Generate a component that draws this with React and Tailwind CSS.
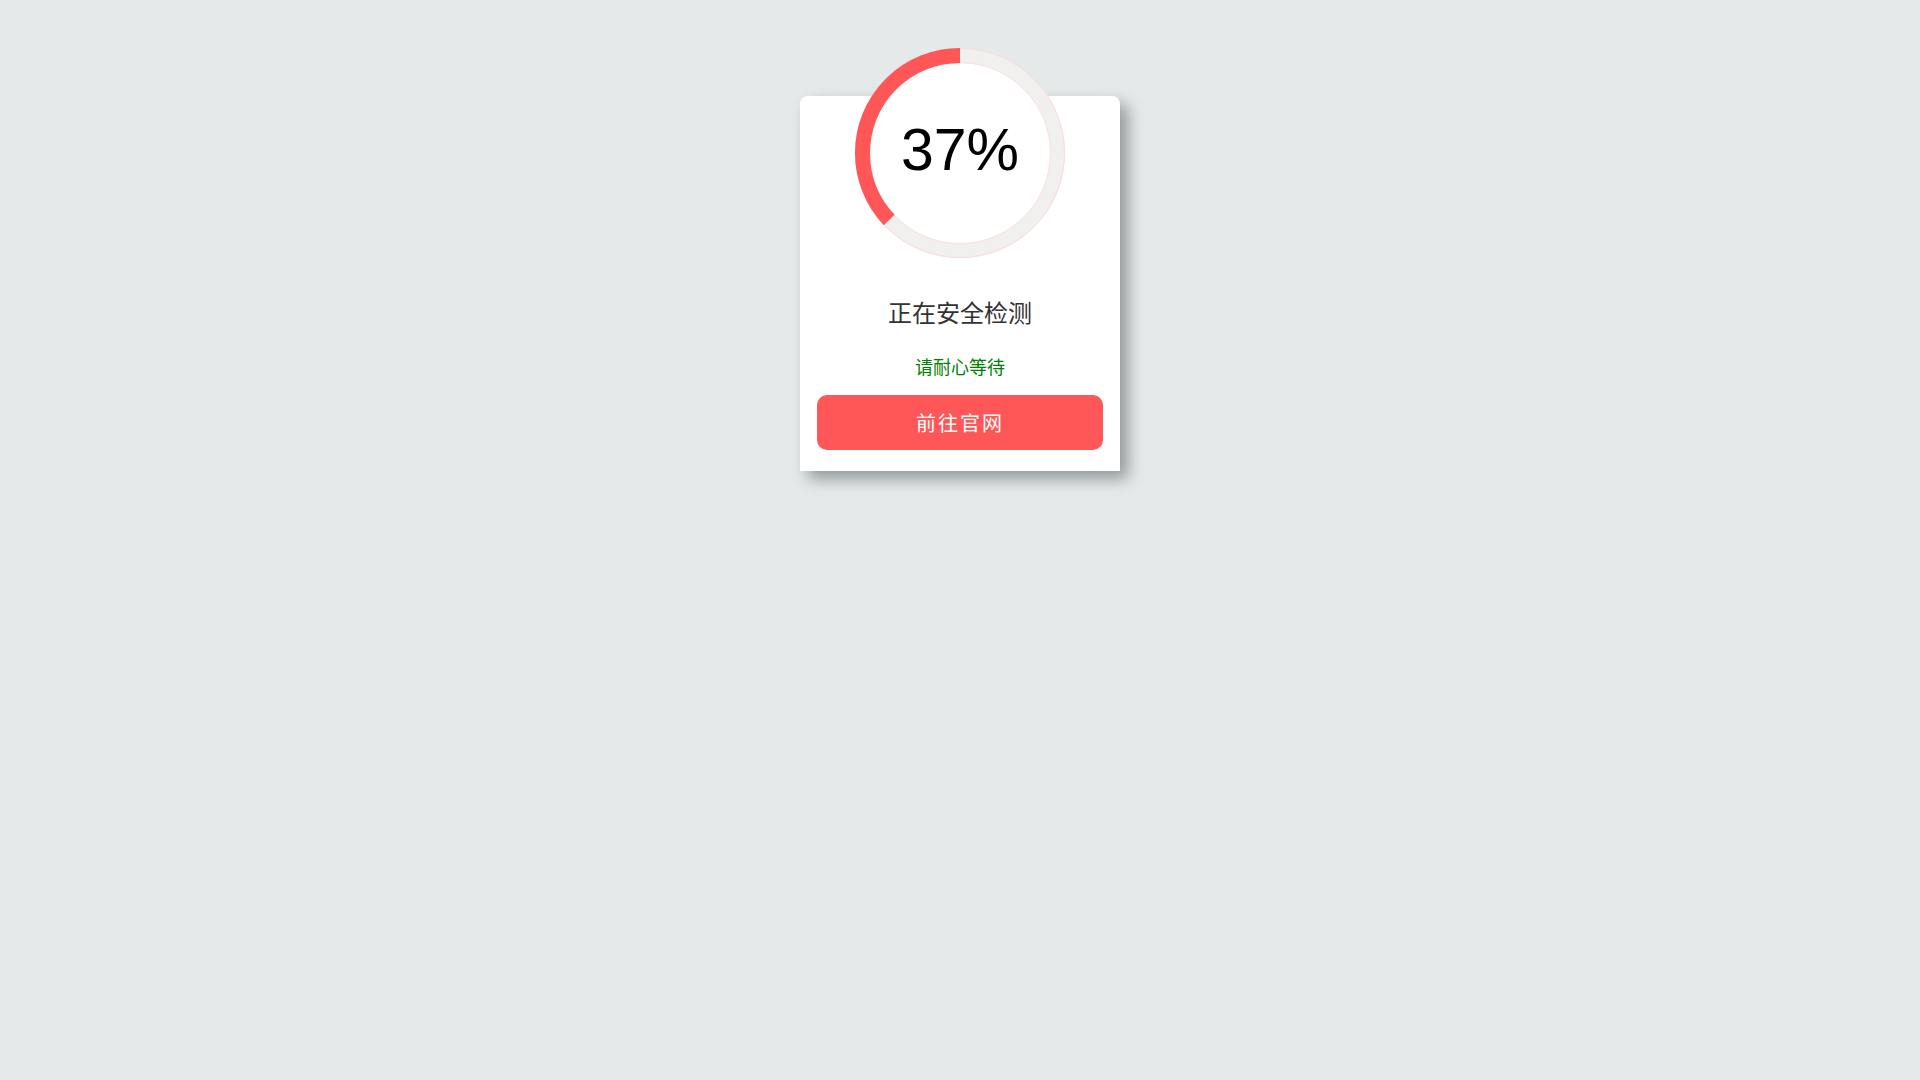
import React from "react";

const Ring = ({ percent }) => {
    const r = 97.5;
    const c = 2 * Math.PI * r;
    return (
        <div className="relative w-[210px] h-[210px] -mt-12">
            <svg width="210" height="210" viewBox="0 0 210 210">
                <circle cx="105" cy="105" r="90" fill="#ffffff" />
                <circle cx="105" cy="105" r={r} fill="none" stroke="#f2f0ef" strokeWidth="15" />
                <circle cx="105" cy="105" r="104.5" fill="none" stroke="#fbd9d9" strokeWidth="1" />
                <circle cx="105" cy="105" r="90.5" fill="none" stroke="#fbe0e0" strokeWidth="1" />
                {/* red arc, counter-clockwise from the top */}
                <circle
                    cx="105"
                    cy="105"
                    r={r}
                    fill="none"
                    stroke="#ff5757"
                    strokeWidth="15"
                    strokeDasharray={`${(c * percent) / 100} ${c}`}
                    transform="translate(210 0) scale(-1 1) rotate(-90 105 105)"
                />
            </svg>
            <div className="absolute inset-0 flex items-center justify-center pb-[6px]">
                <span className="text-[59px] leading-none text-black font-['Liberation_Sans',Arial,sans-serif]">
                    {percent}%
                </span>
            </div>
        </div>
    );
};

const App = () => {
    return (
        <div className="min-h-screen w-full bg-[#e5e9ea] pt-[96px] font-['Noto_Sans_CJK_SC','Noto_Sans',sans-serif]">
            <div className="mx-auto w-[320px] bg-white rounded-t-lg shadow-[8px_8px_16px_rgba(0,0,0,0.35)] flex flex-col items-center px-[17px] pb-[21px]">
                <Ring percent={37} />

                {/* Title */}
                <div className="mt-[36px] text-[24px] leading-[36px] text-[#333333]">
                    正在安全检测
                </div>

                {/* Hint */}
                <div className="mt-[23px] text-[18px] leading-[27px] text-[#008000]">
                    请耐心等待
                </div>

                {/* Button */}
                <button className="mt-[15px] w-full h-[55px] rounded-[10px] bg-[#ff5757] text-white text-[20px] tracking-[2px] flex items-center justify-center">
                    前往官网
                </button>
            </div>
        </div>
    );
};

export default App;
